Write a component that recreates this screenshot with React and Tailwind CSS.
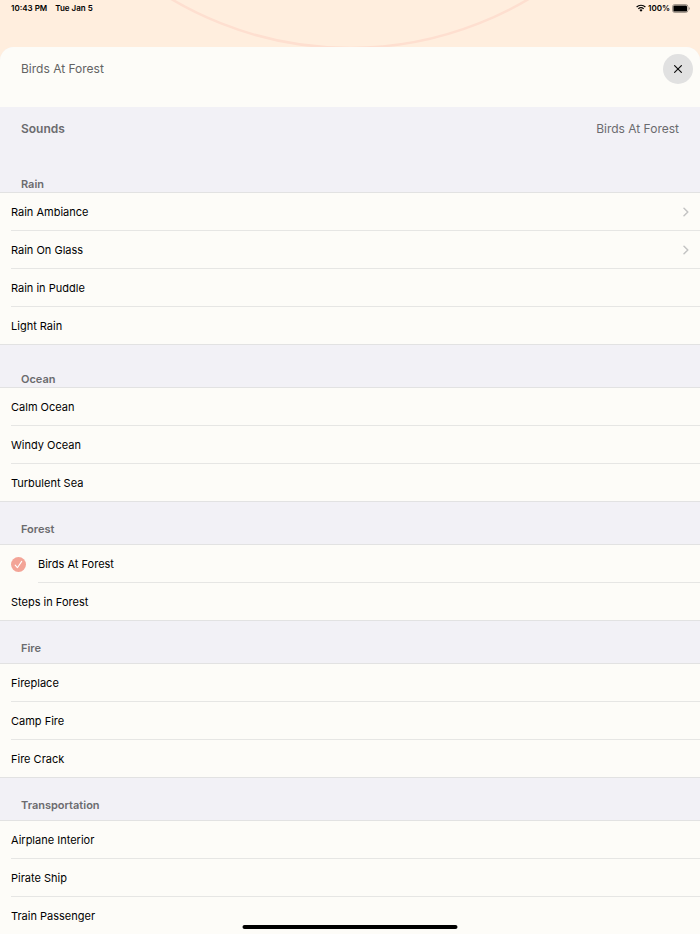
import React, { useState } from "react";
import clsx from "clsx";

const SECTIONS = [
  {
    title: "Rain",
    tight: true,
    sounds: [
      { name: "Rain Ambiance", more: true },
      { name: "Rain On Glass", more: true },
      { name: "Rain in Puddle" },
      { name: "Light Rain" },
    ],
  },
  {
    title: "Ocean",
    tight: true,
    sounds: [{ name: "Calm Ocean" }, { name: "Windy Ocean" }, { name: "Turbulent Sea" }],
  },
  {
    title: "Forest",
    sounds: [{ name: "Birds At Forest" }, { name: "Steps in Forest" }],
  },
  {
    title: "Fire",
    sounds: [{ name: "Fireplace" }, { name: "Camp Fire" }, { name: "Fire Crack" }],
  },
  {
    title: "Transportation",
    sounds: [{ name: "Airplane Interior" }, { name: "Pirate Ship" }, { name: "Train Passenger" }],
  },
];

function WifiIcon() {
  return (
    <svg width="10" height="8" viewBox="0 0 20 15" aria-hidden="true">
      <g fill="none" stroke="#000" strokeWidth="2.4">
        <path d="M1.2 5.6a12.6 12.6 0 0 1 17.6 0" />
        <path d="M4.6 9.2a7.8 7.8 0 0 1 10.8 0" />
      </g>
      <path d="M10 14.8l-3.1-3.2a4.5 4.5 0 0 1 6.2 0z" />
    </svg>
  );
}

function BatteryIcon() {
  return (
    <svg width="18" height="9" viewBox="0 0 18 9" aria-hidden="true">
      <rect x="0.5" y="0.5" width="15.4" height="8" rx="2.2" fill="none" stroke="#000" strokeOpacity="0.35" />
      <rect x="1.4" y="1.4" width="13.6" height="6.2" rx="1.2" />
      <path d="M16.8 3v3c.6-.3 1-.8 1-1.5s-.4-1.2-1-1.5z" fillOpacity="0.4" />
    </svg>
  );
}

function StatusBar() {
  return (
    <div className="relative flex h-4 items-center justify-between pr-[10px] pl-[11px] text-[8px] font-semibold text-black">
      <div className="flex gap-2">
        <span>10:43 PM</span>
        <span>Tue Jan 5</span>
      </div>
      <div className="flex items-center gap-[2px]">
        <WifiIcon />
        <span>100%</span>
        <BatteryIcon />
      </div>
    </div>
  );
}

function CheckBadge() {
  return (
    <svg width="15" height="15" viewBox="0 0 15 15" className="mr-3 shrink-0" aria-hidden="true">
      <circle cx="7.5" cy="7.5" r="7.5" fill="#f3a497" />
      <path d="M4.2 8.1l2.2 2.6 4.3-6.3" fill="none" stroke="#fff" strokeWidth="1.1" strokeLinecap="round" strokeLinejoin="round" />
    </svg>
  );
}

function SoundRow({ sound, selected, last, onSelect }) {
  return (
    <li className={clsx("flex items-center", last && "border-b border-[#e2e2e2]")}>
      <button
        type="button"
        aria-pressed={selected}
        onClick={onSelect}
        className="flex min-w-0 flex-1 items-center pl-[11px] text-left text-[11px] leading-4 text-black"
      >
        {selected && <CheckBadge />}
        <span
          className={clsx(
            "flex flex-1 items-center justify-between pr-[11px]",
            last ? "h-[37px]" : "h-[38px] border-b border-[#e6e6e4]"
          )}
        >
          {sound.name}
          {sound.more && (
            <svg width="6" height="10" viewBox="0 0 6 10" aria-hidden="true">
              <path d="M1 1.2l3.8 3.8L1 8.8" fill="none" stroke="#c4c4c4" strokeWidth="1.5" strokeLinecap="round" strokeLinejoin="round" />
            </svg>
          )}
        </span>
      </button>
    </li>
  );
}

function SoundSection({ section, current, onSelect }) {
  return (
    <section>
      <h3
        className={clsx(
          "flex h-[42px] items-end px-[21px] text-[11px] leading-4 font-semibold text-[#6b6b6e]",
          section.tight ? "pb-0" : "pb-[7px]"
        )}
      >
        {section.title}
      </h3>
      <ul className="border-t border-[#e2e2e2] bg-[#fdfcf8]">
        {section.sounds.map((sound, i) => (
          <SoundRow
            key={sound.name}
            sound={sound}
            selected={sound.name === current}
            last={i === section.sounds.length - 1}
            onSelect={() => onSelect(sound.name)}
          />
        ))}
      </ul>
    </section>
  );
}

export default function App() {
  const [current, setCurrent] = useState("Birds At Forest");

  return (
    <div className="relative flex h-screen flex-col overflow-hidden bg-[#ffeede] font-['Inter',sans-serif]">
      {/* bottom edge of the timer ring behind the sheet */}
      <svg width="720" height="50" viewBox="0 0 720 50" className="absolute top-0 left-1/2 -translate-x-1/2" aria-hidden="true">
        <circle cx="360" cy="-302" r="350" fill="none" stroke="#fedfd0" strokeWidth="2.5" />
      </svg>

      <StatusBar />

      <main className="relative mt-[31px] flex min-h-0 flex-1 flex-col overflow-hidden rounded-t-[14px] bg-[#f2f1f6]">
        <header className="flex h-[60px] shrink-0 items-start justify-between bg-[#fdfcf8] pt-[7px] pr-[7px] pl-[21px]">
          <h1 className="text-[12px] leading-[30px] text-[#636363]">{current}</h1>
          <button
            type="button"
            aria-label="Close"
            className="flex size-[30px] items-center justify-center rounded-full bg-[#e1e1e1]"
          >
            <svg width="8" height="8" viewBox="0 0 8 8" aria-hidden="true">
              <path d="M.6.6l6.8 6.8M7.4.6L.6 7.4" stroke="#111" strokeWidth="1.2" strokeLinecap="round" />
            </svg>
          </button>
        </header>

        <div className="min-h-0 flex-1 overflow-y-auto [scrollbar-width:none]">
          <div className="flex h-[43px] items-center justify-between px-[21px] text-[12px] leading-5 text-[#6b6b6e]">
            <h2 className="font-semibold">Sounds</h2>
            <span>{current}</span>
          </div>
          {SECTIONS.map((section) => (
            <SoundSection key={section.title} section={section} current={current} onSelect={setCurrent} />
          ))}
        </div>
      </main>

      <div className="absolute bottom-[5px] left-1/2 h-1 w-[215px] -translate-x-1/2 rounded-full bg-black" />
    </div>
  );
}
